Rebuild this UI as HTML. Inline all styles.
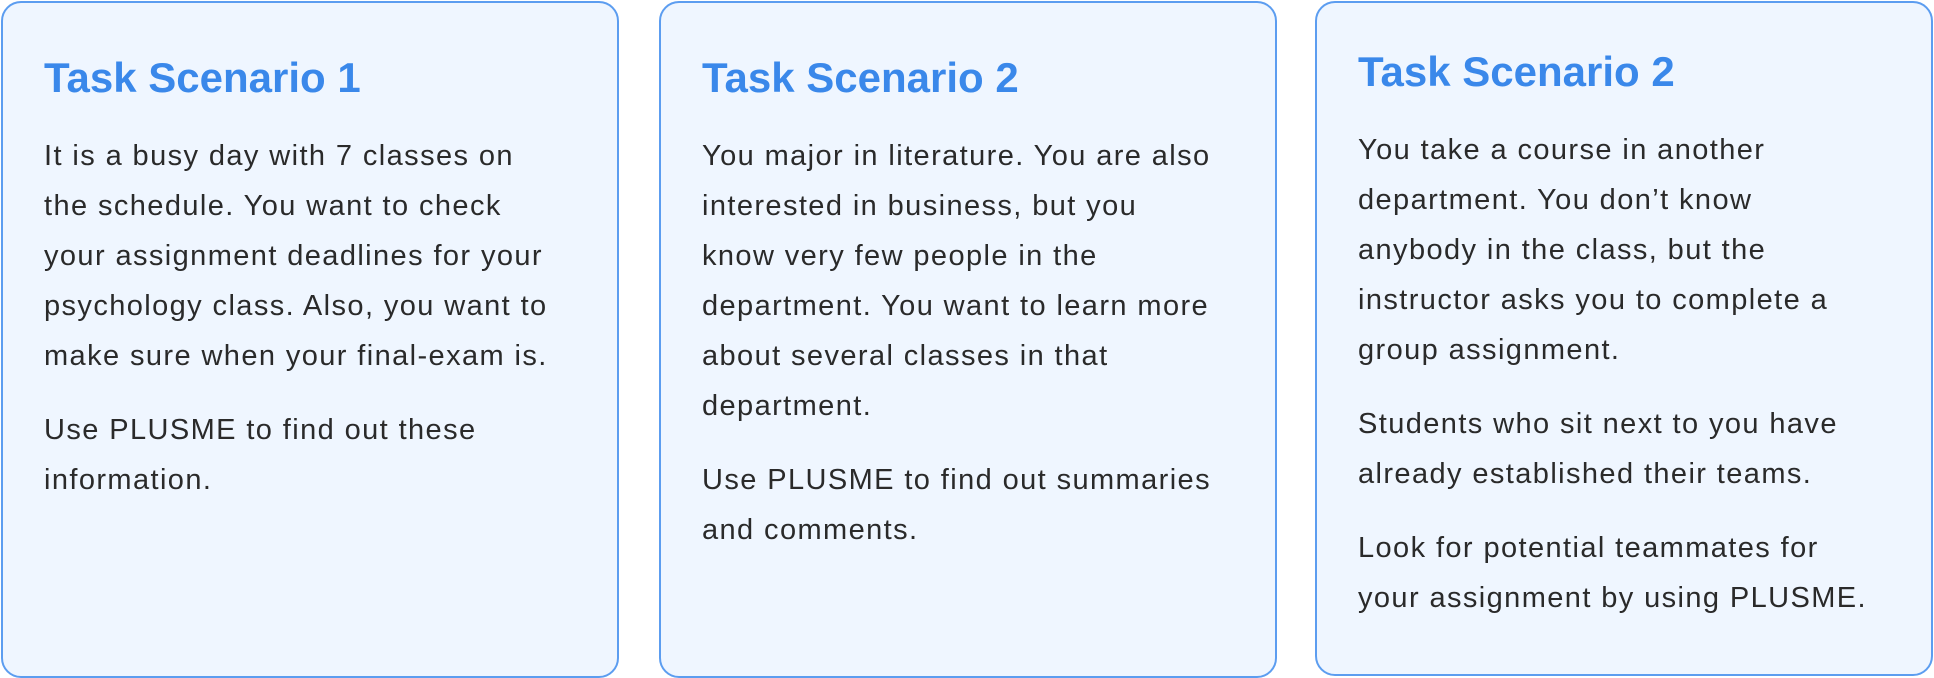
<!DOCTYPE html>
<html><head><meta charset="utf-8"><style>
html,body{margin:0;padding:0;width:1934px;height:678px;background:#fff;overflow:hidden}
.card{position:absolute;box-sizing:border-box;background:#eff6ff;border:2px solid #5c9df0;border-radius:20px;padding:52px 0 0 41px;font-family:"Liberation Sans",sans-serif}
h2{margin:0 0 30px;font-size:42px;line-height:46px;font-weight:bold;color:#3a88ea;letter-spacing:0}
p{margin:0 0 24px;font-size:29px;line-height:50px;color:#2a2a2a;letter-spacing:1.4px;white-space:nowrap}
</style></head><body>
<div class="card" style="left:1px;top:1px;width:618px;height:677px">
<h2>Task Scenario 1</h2>
<p>It is a busy day with 7 classes on<br>the schedule. You want to check<br>your assignment deadlines for your<br>psychology class. Also, you want to<br>make sure when your final-exam is.</p>
<p>Use PLUSME to find out these<br>information.</p>
</div>
<div class="card" style="left:659px;top:1px;width:618px;height:677px">
<h2>Task Scenario 2</h2>
<p>You major in literature. You are also<br>interested in business, but you<br>know very few people in the<br>department. You want to learn more<br>about several classes in that<br>department.</p>
<p>Use PLUSME to find out summaries<br>and comments.</p>
</div>
<div class="card" style="left:1315px;top:1px;width:618px;height:675px;padding-top:46px">
<h2>Task Scenario 2</h2>
<p>You take a course in another<br>department. You don’t know<br>anybody in the class, but the<br>instructor asks you to complete a<br>group assignment.</p>
<p>Students who sit next to you have<br>already established their teams.</p>
<p>Look for potential teammates for<br>your assignment by using PLUSME.</p>
</div>
</body></html>
